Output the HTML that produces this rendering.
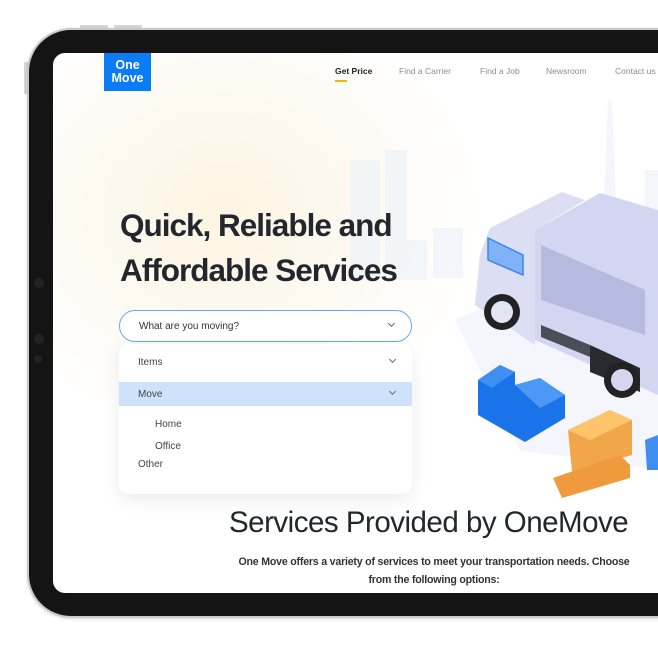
<!DOCTYPE html>
<html><head><meta charset="utf-8"><style>
*{margin:0;padding:0;box-sizing:border-box}
body{width:658px;height:646px;background:#fff;position:relative;overflow:hidden;font-family:"Liberation Sans",sans-serif}
.frame{position:absolute;left:27px;top:28px;width:700px;height:590px;border-radius:44px;background:#141414;border:2px solid #c9c9c9;box-shadow:0 1px 3px rgba(0,0,0,.15)}
.btn{position:absolute;background:#d6d6d6}
.screen{position:absolute;left:53px;top:53px;width:640px;height:540px;border-radius:12px 0 0 12px;overflow:hidden;
background:radial-gradient(ellipse 260px 220px at 170px 160px,#fdf4e2 0%,#fdfaf3 60%,#fff 100%)}
.logo{position:absolute;left:51px;top:0;width:47px;height:38px;background:#0a7cf5;color:#fff;font-weight:bold;font-size:12.5px;line-height:13px;text-align:center;padding-top:6px}
.nav{position:absolute;top:13px;font-size:8.5px;color:#8a8d95}
h1{position:absolute;left:67px;top:150px;font-size:31.5px;line-height:45px;font-weight:bold;color:#23262d;letter-spacing:-1px}
.inp{position:absolute;left:66px;top:257px;width:293px;height:32px;border:1px solid #6aa6f0;border-radius:16px;background:#fff;font-size:10px;color:#333;padding:10px 0 0 19px}
.dd{position:absolute;left:66px;top:291px;width:293px;height:150px;background:#fff;border-radius:10px;box-shadow:0 6px 18px rgba(0,0,0,.08);font-size:10px;color:#444}
.dd div{position:absolute}
.chev{position:absolute;width:5px;height:5px;border-right:1.2px solid #666;border-bottom:1.2px solid #666;transform:rotate(45deg)}
h2{position:absolute;left:176px;top:453px;font-size:29.5px;font-weight:normal;color:#23262d;white-space:nowrap;letter-spacing:-.5px}
p{position:absolute;left:176px;top:500px;width:410px;text-align:center;font-size:10.6px;font-weight:bold;color:#333;line-height:18px;letter-spacing:-.2px}
</style></head><body>
<div class="btn" style="left:80px;top:25px;width:28px;height:4px"></div>
<div class="btn" style="left:114px;top:25px;width:28px;height:4px"></div>
<div class="btn" style="left:24px;top:62px;width:4px;height:32px"></div>
<div class="frame"></div>
<div style="position:absolute;left:34px;top:278px;width:10px;height:10px;border-radius:50%;background:#222"></div>
<div style="position:absolute;left:34px;top:334px;width:10px;height:10px;border-radius:50%;background:#222"></div>
<div style="position:absolute;left:34px;top:355px;width:8px;height:8px;border-radius:50%;background:#222"></div>
<div class="screen">
<svg style="position:absolute;left:0;top:0" width="640" height="540" viewBox="53 53 640 540">
<g fill="#eaf1fa" opacity=".55">
<rect x="350" y="160" width="30" height="120"/><rect x="385" y="150" width="22" height="130"/>
<rect x="433" y="228" width="30" height="50"/><rect x="405" y="240" width="22" height="40"/>
<polygon points="608,100 612,100 616,200 620,200 620,260 600,260 600,200 604,200"/>
<rect x="645" y="170" width="20" height="80"/>
</g>
<polygon points="455,320 658,230 658,470 520,450" fill="#f1f3fc" opacity=".8"/>
<polygon points="480,255 490,228 562,192 585,200 535,230 535,345 475,305" fill="#dcdff4"/>
<polygon points="488,238 523,255 523,275 488,260" fill="#7fb2f7" stroke="#3d86ee" stroke-width="1.5"/>
<polygon points="535,230 600,193 658,210 658,395 535,340" fill="#d3d6f0"/>
<polygon points="541,245 645,290 645,335 541,300" fill="#b6bade"/>
<polygon points="541,325 590,345 590,357 541,337" fill="#4a4d5a"/>
<polygon points="590,345 640,368 640,392 590,372" fill="#2a2b30"/>
<circle cx="502" cy="312" r="18" fill="#222"/><circle cx="502" cy="312" r="11" fill="#e3e5f3"/>
<circle cx="622" cy="380" r="18" fill="#222"/><circle cx="622" cy="380" r="11" fill="#d4d6ef"/>
<polygon points="478,380 500,365 515,372 515,385 540,378 565,395 565,418 525,442 478,415" fill="#1a73e8"/>
<polygon points="478,380 500,365 515,372 492,388" fill="#3f8ef2"/>
<polygon points="515,385 540,378 565,395 540,408" fill="#4b98f5"/>
<polygon points="568,430 610,410 632,420 632,455 572,472" fill="#f2a64a"/>
<polygon points="568,430 610,410 632,420 590,440" fill="#fcc46b"/>
<polygon points="553,478 620,455 630,465 630,478 562,498" fill="#f09a3e"/>
<polygon points="645,440 658,435 658,470 647,470" fill="#3f8ef2"/>
</svg>
<div class="logo">One<br>Move</div>
<div class="nav" style="left:282px;color:#222;font-weight:bold">Get Price<div style="width:12px;height:1.5px;background:#f2b705;margin-top:4px"></div></div>
<div class="nav" style="left:346px">Find a Carrier</div>
<div class="nav" style="left:427px">Find a Job</div>
<div class="nav" style="left:493px">Newsroom</div>
<div class="nav" style="left:562px">Contact us</div>
<h1>Quick, Reliable and<br>Affordable Services</h1>
<div class="inp">What are you moving?<span class="chev" style="right:17px;top:10px"></span></div>
<div class="dd">
<div style="left:19px;top:13px">Items</div><span class="chev" style="right:17px;top:13px"></span>
<div style="left:0;top:38px;width:293px;height:24px;background:#cfe2fb"></div>
<div style="left:19px;top:45px">Move</div><span class="chev" style="right:17px;top:45px"></span>
<div style="left:36px;top:75px">Home</div>
<div style="left:36px;top:97px">Office</div>
<div style="left:19px;top:115px">Other</div>
</div>
<h2>Services Provided by OneMove</h2>
<p>One Move offers a variety of services to meet your transportation needs. Choose from the following options:</p>
</div>
</body></html>
